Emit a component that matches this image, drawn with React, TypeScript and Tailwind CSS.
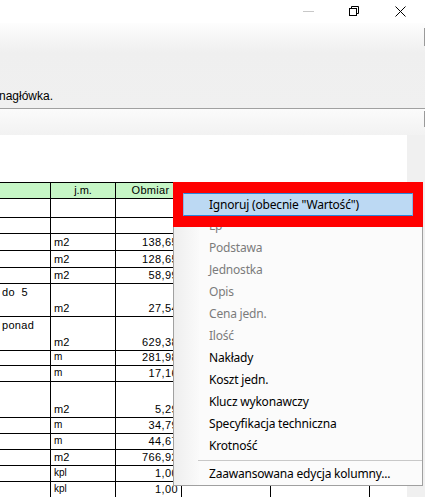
import React from "react";

type Row = { h: number; d?: string; jm?: string; v?: string; small?: boolean };

const rows: Row[] = [
  { h: 19 },
  { h: 16 },
  { h: 17, jm: "m2", v: "138,65" },
  { h: 17, jm: "m2", v: "128,65" },
  { h: 16, jm: "m2", v: "58,99" },
  { h: 33, d: "do\u00a0\u00a05", jm: "m2", v: "27,54" },
  { h: 34, d: "ponad", jm: "m2", v: "629,38" },
  { h: 15, jm: "m", v: "281,98", small: true },
  { h: 16, jm: "m", v: "17,16", small: true },
  { h: 36, jm: "m2", v: "5,29" },
  { h: 16, jm: "m", v: "34,79", small: true },
  { h: 16, jm: "m", v: "44,67", small: true },
  { h: 16, jm: "m2", v: "766,92" },
  { h: 16, jm: "kpl", v: "1,00", small: true },
  { h: 16, jm: "kpl", v: "1,00", small: true },
];

const menuItems: { t: string; dis?: boolean }[] = [
  { t: "Lp", dis: true },
  { t: "Podstawa", dis: true },
  { t: "Jednostka", dis: true },
  { t: "Opis", dis: true },
  { t: "Cena jedn.", dis: true },
  { t: "Ilość", dis: true },
  { t: "Nakłady" },
  { t: "Koszt jedn." },
  { t: "Klucz wykonawczy" },
  { t: "Specyfikacja techniczna" },
  { t: "Krotność" },
];

export default function App() {
  return (
    <div
      className="relative w-[425px] h-[497px] overflow-hidden bg-white"
      style={{ fontFamily: '"Liberation Sans", Arial, sans-serif' }}
    >
      {/* Title bar */}
      <div className="h-[23px] bg-white flex items-start justify-end pr-[2px]">
        <div className="w-[46px] h-[23px] flex items-center justify-center">
          <svg width="11" height="11" viewBox="0 0 11 11">
            <line x1="0" y1="5.5" x2="11" y2="5.5" stroke="#c8c8c8" strokeWidth="1" />
          </svg>
        </div>
        <div className="w-[46px] h-[23px] flex items-center justify-center">
          <svg width="11" height="11" viewBox="0 0 11 11">
            <rect x="0.5" y="2.5" width="7" height="7" fill="none" stroke="#000" strokeWidth="1" />
            <path d="M2.5 2.5 V0.5 H9.5 V7.5 H7.5" fill="none" stroke="#000" strokeWidth="1" />
          </svg>
        </div>
        <div className="w-[46px] h-[23px] flex items-center justify-center">
          <svg width="11" height="11" viewBox="0 0 11 11">
            <path d="M0.5 0.5 L10.5 10.5 M10.5 0.5 L0.5 10.5" stroke="#000" strokeWidth="1" />
          </svg>
        </div>
      </div>

      {/* Toolbar area */}
      <div className="h-[85px] bg-gradient-to-b from-[#fdfdfd] via-[#efefef] via-[35%] to-[#f0f0f0] flex flex-col">
        <div className="flex justify-end">
          <div className="w-[1px] h-[18px] mt-[5px] bg-[#9a9a9a]" />
        </div>
        <div className="flex-1" />
        <div className="text-[12px] leading-[14px] text-black pb-[5px] -ml-[1px]">nagłówka.</div>
      </div>
      <div className="h-[1px] bg-[#a0a0a0]" />
      <div className="h-[26px] bg-gradient-to-b from-[#fbfbfb] to-[#f2f2f2] flex justify-end">
        <div className="w-[1px] h-[16px] mt-[2px] bg-[#9a9a9a]" />
      </div>

      {/* Content */}
      <div className="flex h-[362px]">
        <div className="w-[407px] bg-white overflow-hidden pt-[47px]">
          <div className="w-[460px] border-t border-black text-[11px] text-black">
            {/* header */}
            <div className="flex h-[16px] border-b border-black bg-[#c6f6c6] leading-[15px]">
              <div className="w-[51px] border-r border-black" />
              <div className="w-[65px] border-r border-black text-center">j.m.</div>
              <div className="w-[66px] border-r border-black text-center pl-[4px] tracking-[0.3px]">Obmiar</div>
              <div className="w-[89px] border-r border-black" />
              <div className="w-[99px] border-r border-black" />
              <div className="flex-1" />
            </div>
            {rows.map((r, i) => (
              <div key={i} className="flex border-b border-black leading-[16px]" style={{ height: r.h }}>
                <div className="w-[51px] border-r border-black pl-[2px] whitespace-pre tracking-[0.3px]">
                  {r.d ?? ""}
                </div>
                <div
                  className={
                    "w-[65px] border-r border-black pl-[3px] flex items-end " +
                    (r.small ? "text-[10px]" : "text-[11px]")
                  }
                >
                  {r.jm ?? ""}
                </div>
                <div className="w-[66px] border-r border-black pr-[3px] flex items-end justify-end tracking-[0.4px]">
                  {r.v ?? ""}
                </div>
                <div className="w-[89px] border-r border-black" />
                <div className="w-[99px] border-r border-black" />
                <div className="flex-1" />
              </div>
            ))}
          </div>
        </div>
        <div className="flex-1 bg-[#f0f0f0]" />
      </div>

      {/* Context menu */}
      <div
        className="absolute left-[173px] top-[190px] w-[250px] border border-[#a0a0a0] bg-[#fbfbfb] pt-[2px]"
        style={{ fontFamily: '"Noto Sans", "Open Sans", sans-serif' }}
      >
        <div className="absolute left-0 top-0 bottom-0 w-[25px] bg-gradient-to-r from-[#eeeeee] to-[#fafafa]" />
        <div className="relative tracking-[-0.2px]">
          <div className="mx-[9px] h-[23px] bg-[#bcd9f3] border-y border-[#2a86dc] border-x border-x-[#86b8e8] flex items-center pl-[25px] text-[12px] text-black">
            Ignoruj (obecnie "Wartość")
          </div>
          {menuItems.map((m, i) => (
            <div
              key={i}
              className={
                "h-[22px] flex items-center pl-[35px] text-[12px] " +
                (m.dis ? "text-[#7b7b7b]" : "text-black")
              }
              style={{ marginTop: i === 0 ? -1 : 0 }}
            >
              {m.t}
            </div>
          ))}
          <div className="h-[6px] flex items-center pl-[24px]">
            <div className="flex-1 h-[1px] bg-[#c8c8c8]" />
          </div>
          <div className="h-[22px] flex items-center pl-[35px] text-[12px] text-black">
            Zaawansowana edycja kolumny...
          </div>
        </div>
      </div>

      {/* Red annotation frame */}
      <div className="absolute left-[173px] top-[182px] w-[250px] h-[45px] border-x-[10px] border-y-[11px] border-[#ff0000]" />
    </div>
  );
}
